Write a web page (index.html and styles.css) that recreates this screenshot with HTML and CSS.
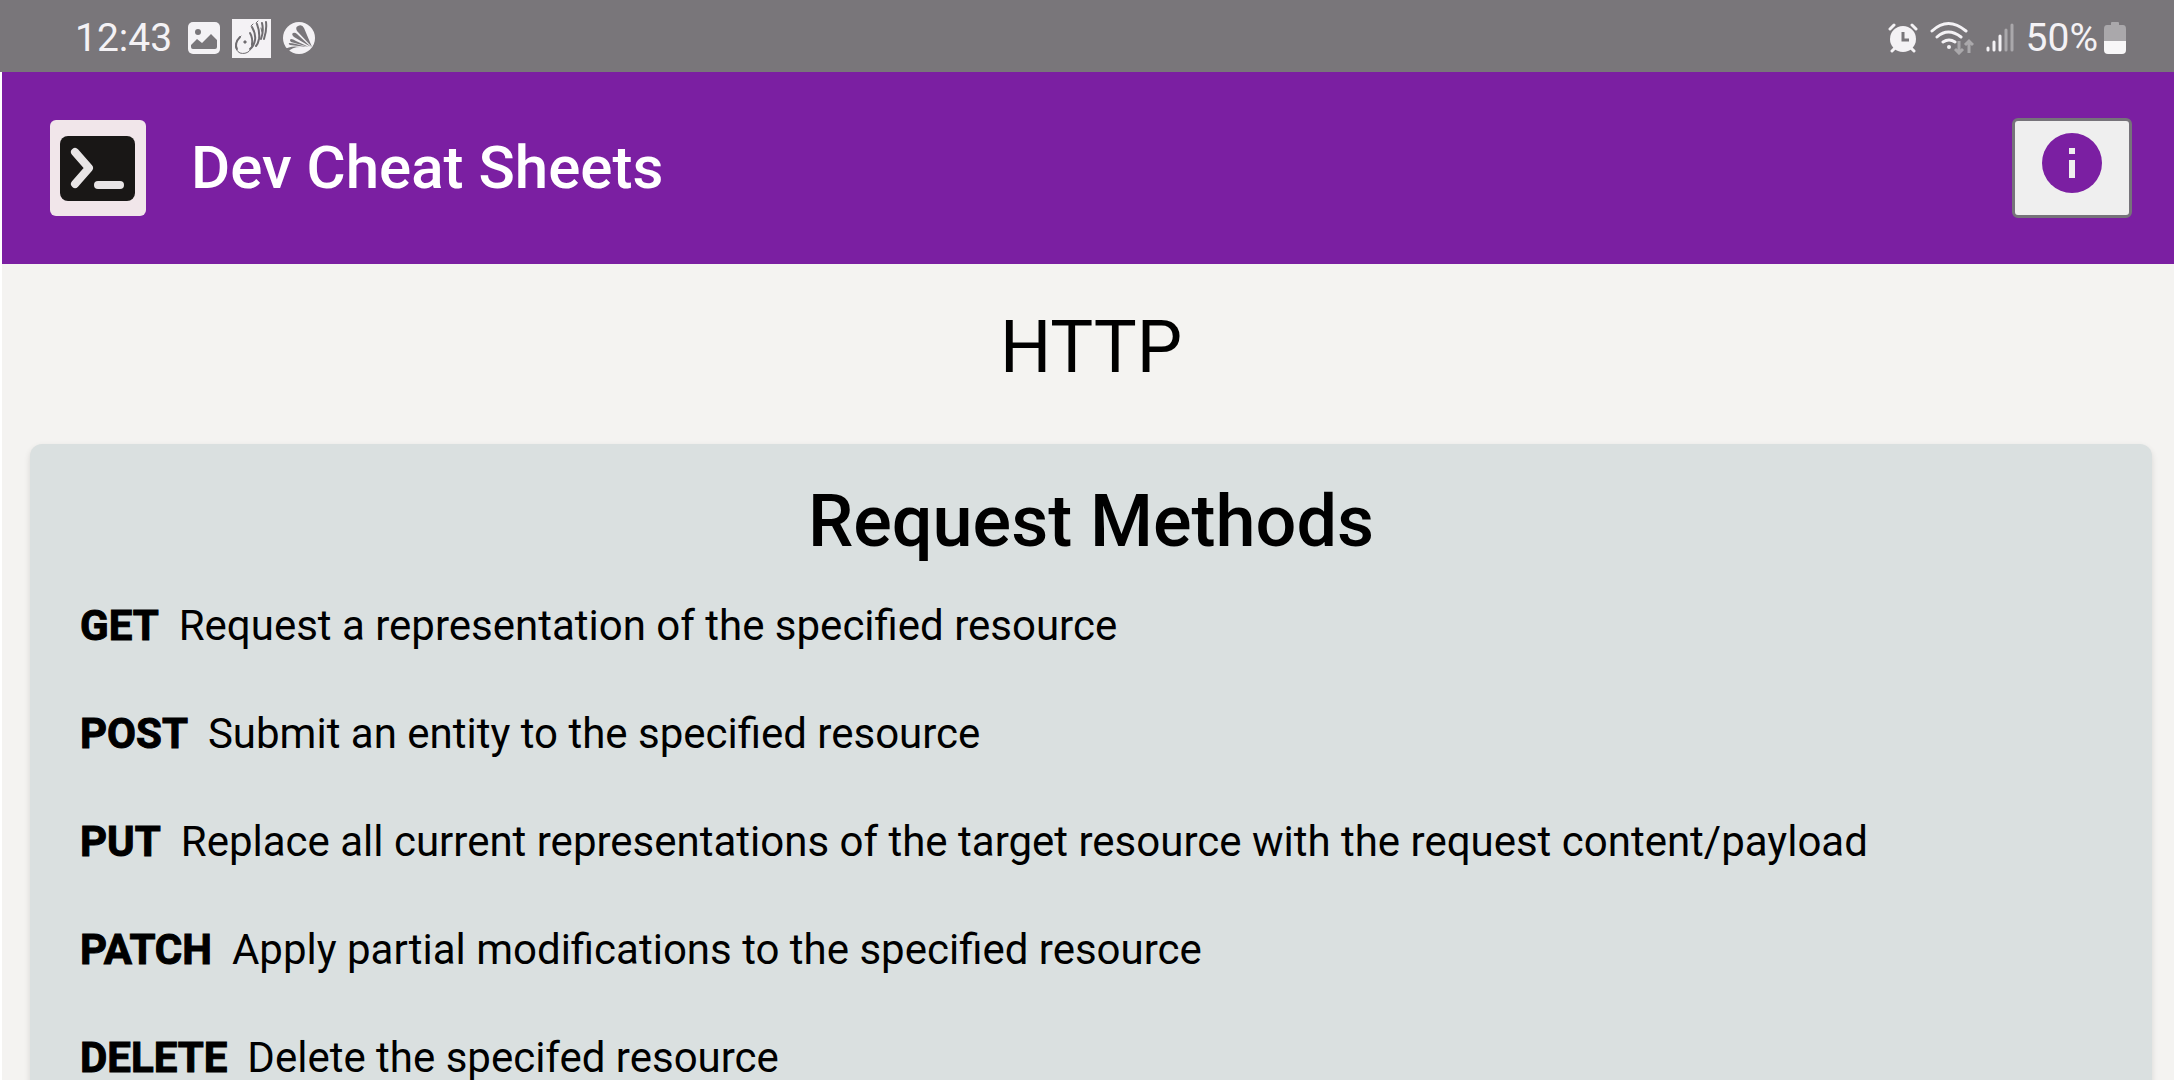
FILE: index.html
```html
<!DOCTYPE html>
<html lang="en">
<head>
<meta charset="utf-8">
<meta name="viewport" content="width=device-width, initial-scale=1">
<title>Dev Cheat Sheets</title>
<link rel="stylesheet" href="styles.css">
</head>
<body>
<div class="status-bar">
  <div class="status-group">
    <span class="clock">12:43</span>
    <svg class="status-icon picture-icon" viewBox="0 0 32 32" aria-hidden="true">
      <rect width="32" height="32" rx="5" fill="#f4f2f5"/>
      <circle cx="10" cy="10" r="3" fill="#79767a"/>
      <path d="M3 25V23L9 17L14 21L23 12L29 18V25Q29 27 27 27H5Q3 27 3 25Z" fill="#79767a"/>
    </svg>
    <svg class="status-icon script-icon" viewBox="0 0 39 39" aria-hidden="true">
      <rect width="39" height="39" fill="#f4f2f5"/>
      <g fill="none" stroke="#6f6c70" stroke-linecap="round">
        <path d="M9 17C2 23 2 31 8 34C15 36 21 31 20 24" stroke-width="1"/>
        <path d="M8 18C4 22 3 27 5 30M18 14Q21 19 20 26" stroke-width="2"/>
        <path d="M20 8Q24 15 23 21Q22 27 18 30M25 5Q28 13 27 20Q26 25 24 27M30 4Q32 12 29 20M34 3Q35 11 32 20" stroke-width="2"/>
        <path d="M19 7L21 5M24 4L26 2M29 9L30 13" stroke-width="1"/>
      </g>
      <path d="M13 21L15 23L13 25L11 23Z" fill="#6f6c70"/>
    </svg>
    <svg class="status-icon fan-icon" viewBox="0 0 33 33" aria-hidden="true">
      <circle cx="16" cy="16" r="16" fill="#f4f2f5"/>
      <g fill="#79767a">
        <path d="M29 25L14 9Q12 5 15 4Q19 2 21 6Z"/>
        <path d="M28 25L11 15Q8 12 10 11Q12 10 14 12Z"/>
        <path d="M26 25L8 20Q6 18 8 17Q10 17 13 19Z"/>
        <path d="M24 25L7 23Q5 22 6 21Q9 21 13 22Z"/>
        <path d="M0 28Q8 23 17 25Q9 25 5 30Z"/>
      </g>
    </svg>
  </div>
  <div class="status-group">
    <svg class="status-icon alarm-icon" viewBox="0 0 30 30" aria-hidden="true">
      <g stroke="#f4f2f5" stroke-width="3" stroke-linecap="round"><path d="M2 6L6 2M24 2L28 6M7 25L4 28M23 25L26 28"/></g>
      <circle cx="15" cy="16" r="13" fill="#f4f2f5"/>
      <path d="M15 9V17H21" fill="none" stroke="#79767a" stroke-width="3"/>
    </svg>
    <svg class="status-icon wifi-icon" viewBox="0 0 44 34" aria-hidden="true">
      <g fill="none" stroke="#f4f2f5" stroke-width="3" stroke-linecap="round">
        <path d="M2 10Q18 -5 36 10M7 16Q18 6 31 16M13 21Q19 17 25 21"/>
      </g>
      <circle cx="19" cy="26" r="2" fill="#f4f2f5"/>
      <path d="M29 20V32M25 28L29 32L33 28M39 32V20M35 24L39 20L43 24" fill="none" stroke="#aaa8ab" stroke-width="3"/>
    </svg>
    <svg class="status-icon signal-icon" viewBox="0 0 28 30" aria-hidden="true">
      <g stroke-width="3" stroke-linecap="round">
        <path d="M2 25V27M8 19V27M14 13V27" stroke="#f4f2f5"/>
        <path d="M20 7V27M26 2V27" stroke="#aaa8ab"/>
      </g>
    </svg>
    <span class="battery">
      <span>50%</span>
      <svg class="status-icon battery-icon" viewBox="0 0 22 32" aria-hidden="true">
        <path d="M7 1Q7 0 8 0H14Q15 0 15 1V3H19Q22 3 22 7V19H0V7Q0 3 3 3H7Z" fill="#aaa8ab"/>
        <path d="M0 19H22V28Q22 32 18 32H4Q0 32 0 28Z" fill="#f8f7f8"/>
      </svg>
    </span>
  </div>
</div>

<div class="app">
  <header class="app-bar">
    <svg class="logo" viewBox="0 0 96 96" role="img" aria-label="Terminal">
      <rect width="96" height="96" rx="6" fill="#f1e6ea"/>
      <rect x="10" y="16" width="75" height="65" rx="8" fill="#191716"/>
      <path d="M25 32L39 48L25 64" fill="none" stroke="#e8e5e6" stroke-width="8" stroke-linecap="round" stroke-linejoin="round"/>
      <path d="M48 65H70" stroke="#e8e5e6" stroke-width="8" stroke-linecap="round"/>
    </svg>
    <h1 class="app-title">Dev Cheat Sheets</h1>
    <button class="info-button" type="button" aria-label="About">
      <svg class="info-icon" viewBox="0 0 60 60" aria-hidden="true">
        <circle cx="30" cy="30" r="30" fill="#7b1fa2"/>
        <path d="M27 15H33V21H27ZM27 27H33V45H27Z" fill="#efefef"/>
      </svg>
    </button>
  </header>

  <main class="content">
    <h2 class="page-title">HTTP</h2>
    <section class="card">
      <h3 class="card-title">Request Methods</h3>
      <ul class="method-list">
        <li class="method"><b class="method-name">GET</b><span>Request a representation of the specified resource</span></li>
        <li class="method"><b class="method-name">POST</b><span>Submit an entity to the specified resource</span></li>
        <li class="method"><b class="method-name">PUT</b><span>Replace all current representations of the target resource with the request content/payload</span></li>
        <li class="method"><b class="method-name">PATCH</b><span>Apply partial modifications to the specified resource</span></li>
        <li class="method"><b class="method-name">DELETE</b><span>Delete the specifed resource</span></li>
      </ul>
    </section>
  </main>
</div>
</body>
</html>
```
FILE: styles.css
```css
* {
  box-sizing: border-box;
}

body {
  margin: 0;
  height: 100vh;
  display: flex;
  flex-direction: column;
  overflow: hidden;
  background: #f4f3f1;
  color: #000;
  font-family: Roboto, "Liberation Sans", sans-serif;
  font-size: 42px;
  line-height: 60px;
}

h1,
h2,
h3,
ul {
  margin: 0;
  padding: 0;
  font-weight: 400;
}

.status-bar {
  flex: none;
  display: flex;
  justify-content: space-between;
  height: 72px;
  padding: 4px 48px 0 75px;
  background: #79767a;
  color: #f4f2f5;
  font-size: 39px;
}

.status-group {
  display: flex;
  align-items: center;
  gap: 12px;
}

.status-icon {
  flex: none;
}

.clock {
  margin-right: 4px;
}

.picture-icon {
  width: 32px;
  height: 32px;
}

.script-icon {
  width: 39px;
  height: 39px;
}

.fan-icon {
  width: 33px;
  height: 33px;
}

.alarm-icon {
  width: 30px;
  height: 30px;
}

.wifi-icon {
  width: 44px;
  height: 34px;
}

.signal-icon {
  width: 28px;
  height: 30px;
}

.battery {
  display: flex;
  align-items: center;
  gap: 6px;
}

.battery-icon {
  width: 22px;
  height: 32px;
}

.app {
  flex: 1;
  min-height: 0;
  display: flex;
  flex-direction: column;
  border-left: 2px solid #fff;
}

.app-bar {
  flex: none;
  display: flex;
  align-items: center;
  height: 192px;
  padding: 0 42px 0 48px;
  background: #7b1fa2;
  color: #fff;
}

.logo {
  flex: none;
  width: 96px;
  height: 96px;
}

.app-title {
  flex: 1;
  margin-left: 45px;
  font-size: 60px;
  font-weight: 500;
}

.info-button {
  flex: none;
  display: flex;
  justify-content: center;
  width: 120px;
  height: 100px;
  padding: 12px 0;
  border: 3px solid #76737a;
  border-radius: 6px;
  background: #efefef;
}

.info-icon {
  width: 60px;
  height: 60px;
}

.content {
  flex: 1;
  min-height: 0;
  padding: 36px 22px 0 28px;
  overflow-y: auto;
  scrollbar-width: none;
}

.page-title,
.card-title {
  font-size: 72px;
  line-height: 96px;
  text-align: center;
}

.page-title {
  margin-bottom: 48px;
}

.card {
  padding: 30px 50px;
  border-radius: 12px;
  background: #dae0e0;
  box-shadow: 0 3px 6px rgba(0, 0, 0, 0.12);
}

.card-title {
  margin-bottom: 2px;
  font-weight: 500;
}

.method-list {
  list-style: none;
}

.method {
  display: flex;
  gap: 20px;
  padding: 24px 0;
}

.method-name {
  font-weight: 700;
  -webkit-text-stroke: 1px #000;
}
```
